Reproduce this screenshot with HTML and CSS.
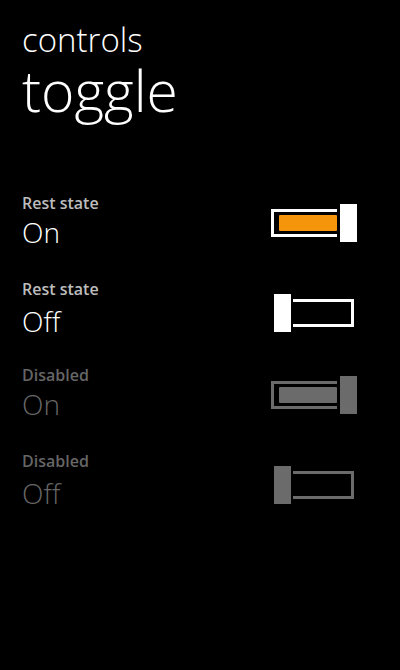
FILE: index.html
```html
<!DOCTYPE html>
<html lang="en">
<head>
    <meta charset="UTF-8">
    <meta name="viewport" content="width=device-width, initial-scale=1.0" />
    <title>toggle</title>
    <link rel="stylesheet" href="styles.css">
</head>
<body>
    <main>
        <header>
            <div class="app_title">controls</div>
            <h1>toggle</h1>
        </header>
        <section class="list">
            <div class="row">
                <div class="texts">
                    <span class="label">Rest state</span>
                    <span class="value">On</span>
                </div>
                <div class="switch on">
                    <div class="track"><div class="fill"></div></div>
                    <div class="thumb"></div>
                </div>
            </div>
            <div class="row off">
                <div class="texts">
                    <span class="label">Rest state</span>
                    <span class="value">Off</span>
                </div>
                <div class="switch">
                    <div class="thumb"></div>
                    <div class="track"></div>
                </div>
            </div>
            <div class="row disabled">
                <div class="texts">
                    <span class="label">Disabled</span>
                    <span class="value">On</span>
                </div>
                <div class="switch on">
                    <div class="track"><div class="fill"></div></div>
                    <div class="thumb"></div>
                </div>
            </div>
            <div class="row off disabled">
                <div class="texts">
                    <span class="label">Disabled</span>
                    <span class="value">Off</span>
                </div>
                <div class="switch">
                    <div class="thumb"></div>
                    <div class="track"></div>
                </div>
            </div>
        </section>
    </main>
</body>
</html>
```

FILE: styles.css
```css
html {
    font-family: "Open Sans", "Liberation Sans", sans-serif;
    background-color: black;
}

body {
    margin: 0;
    background-color: black;
    color: white;
}

main {
    display: flex;
    flex-direction: column;
    padding: 20px 43px 0 22px;
}

.app_title {
    font-size: 33px;
    font-weight: 300;
    line-height: 40px;
}

h1 {
    margin: 0;
    font-size: 57px;
    font-weight: 300;
    line-height: 60px;
}

.list {
    display: grid;
    grid-auto-rows: 86px;
    margin-top: 73px;
}

.row {
    display: grid;
    grid-template-columns: 1fr auto;
    align-items: start;
}

.texts {
    display: flex;
    flex-direction: column;
}

.label {
    font-size: 16px;
    font-weight: 600;
    line-height: 20px;
    color: #bdbdbd;
}

.value {
    margin-top: 4px;
    font-size: 28px;
    font-weight: 300;
    line-height: 30px;
}

.row.off .value {
    margin-top: 7px;
}

.switch {
    --ink: white;
    display: flex;
    align-items: center;
    width: 86px;
    height: 38px;
    margin-top: 11px;
}

.row.off .switch {
    margin-top: 15px;
}

.thumb {
    width: 17px;
    height: 38px;
    background-color: var(--ink);
}

.track {
    box-sizing: border-box;
    height: 28px;
    border: 3px solid var(--ink);
}

.switch.on .track {
    display: flex;
    width: 66px;
    margin-right: 3px;
    padding: 3px 0 3px 5px;
    border-right: 0;
}

.fill {
    flex: 1;
    background-color: #f4950c;
    border-radius: 1px;
}

.switch:not(.on) .thumb {
    margin-left: 3px;
}

.switch:not(.on) .track {
    width: 61px;
    margin-left: 2px;
    border-left: 0;
}

.row.disabled .label,
.row.disabled .value {
    color: #666666;
}

.row.disabled .switch {
    --ink: #6b6b6b;
}

.row.disabled .fill {
    background-color: #6b6b6b;
}
```
